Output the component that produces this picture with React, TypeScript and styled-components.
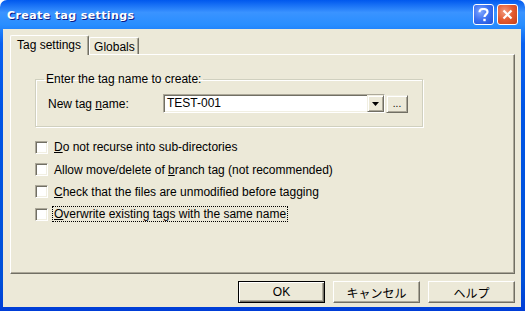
import styled, { createGlobalStyle } from 'styled-components';

const GlobalStyle = createGlobalStyle`
  html, body {
    margin: 0;
    padding: 0;
    background: #ffffff;
  }
  body {
    font-family: 'Liberation Sans', Arial, 'Noto Sans CJK JP', sans-serif;
    font-size: 12px;
    color: #000000;
  }
`;

const Window = styled.div`
  width: 525px;
  height: 311px;
  box-sizing: border-box;
  display: flex;
  flex-direction: column;
  border-radius: 7px 7px 0 0;
  overflow: hidden;
  background: linear-gradient(180deg, #0058ee 0%, #3a93ff 4%, #288eff 8%, #0a61f0 14%, #0055e5 35%, #0052dd 70%, #0050d8 90%, #003dd7 100%);
`;

const TitleBar = styled.div`
  height: 29px;
  flex: none;
  display: flex;
  align-items: center;
  padding: 0 7px 0 7px;
  gap: 3px;
`;

const TitleText = styled.div`
  flex: 1;
  color: #ffffff;
  font-family: 'DejaVu Sans', Verdana, sans-serif;
  font-weight: bold;
  font-size: 11px;
  letter-spacing: 0.4px;
  text-shadow: 1px 1px 0 #0a1883;
  padding-top: 1px;
`;

const CaptionButton = styled.div<{ $variant: 'help' | 'close' }>`
  width: 21px;
  height: 21px;
  box-sizing: border-box;
  border: 1px solid #ffffff;
  border-radius: 3px;
  display: flex;
  align-items: center;
  justify-content: center;
  background: ${({ $variant }) =>
    $variant === 'close'
      ? 'radial-gradient(circle at 35% 35%, #f29a7d 0%, #e35a2f 50%, #c4401a 100%)'
      : 'radial-gradient(circle at 35% 35%, #7fa6ff 0%, #3a6ff0 50%, #2152d6 100%)'};
`;

const Client = styled.div`
  flex: 1;
  margin: 0 4px 4px 3px;
  background: #ece9d8;
  display: flex;
  flex-direction: column;
  padding: 6px 6px 0 7px;
`;

const TabStrip = styled.div`
  display: flex;
  align-items: flex-end;
  height: 19px;
  position: relative;
  z-index: 1;
`;

const Tab = styled.div<{ $active?: boolean }>`
  box-sizing: border-box;
  height: ${({ $active }) => ($active ? '20px' : '17px')};
  margin-bottom: ${({ $active }) => ($active ? '-1px' : '0')};
  padding: ${({ $active }) => ($active ? '2px 7px 0 6px' : '2px 3px 0 4px')};
  border-top: 1px solid #ffffff;
  border-left: 1px solid #ffffff;
  border-right: 1px solid #716f64;
  box-shadow: inset -1px 0 0 #aca899;
  border-radius: 2px 2px 0 0;
  background: #ece9d8;
  white-space: nowrap;
  line-height: 15px;
`;

const Panel = styled.div`
  height: 220px;
  box-sizing: border-box;
  border-top: 1px solid #ffffff;
  border-left: 1px solid #ffffff;
  border-right: 1px solid #716f64;
  border-bottom: 1px solid #716f64;
  box-shadow: inset -1px -1px 0 #aca899;
  padding: 17px 0 0 24px;
  display: flex;
  flex-direction: column;
`;

const GroupBox = styled.fieldset`
  margin: 0;
  width: 388px;
  height: 55px;
  box-sizing: border-box;
  border: 1px solid #d0d0bf;
  border-radius: 0;
  box-shadow: inset 1px 1px 0 #ffffff, 1px 1px 0 #ffffff;
  padding: 8px 0 0 12px;
  min-inline-size: 0;
`;

const Legend = styled.legend`
  padding: 0 2px;
  margin-left: -4px;
  line-height: 14px;
`;

const FieldRow = styled.div`
  display: flex;
  align-items: center;
  height: 19px;
`;

const FieldLabel = styled.label`
  width: 115px;
`;

const ComboBox = styled.div`
  width: 222px;
  height: 19px;
  box-sizing: border-box;
  display: flex;
  background: #ffffff;
  border-top: 1px solid #aca899;
  border-left: 1px solid #aca899;
  border-right: 1px solid #ffffff;
  border-bottom: 1px solid #ffffff;
  box-shadow: inset 1px 1px 0 #716f64, inset -1px -1px 0 #f1efe2;
`;

const ComboText = styled.div`
  flex: 1;
  padding: 1px 0 0 3px;
  line-height: 15px;
`;

const RaisedButton = styled.div<{ $width: number; $height: number }>`
  width: ${({ $width }) => $width}px;
  height: ${({ $height }) => $height}px;
  box-sizing: border-box;
  background: #ece9d8;
  border-top: 1px solid #f1efe2;
  border-left: 1px solid #f1efe2;
  border-right: 1px solid #716f64;
  border-bottom: 1px solid #716f64;
  box-shadow: inset 1px 1px 0 #ffffff, inset -1px -1px 0 #aca899;
  display: flex;
  align-items: center;
  justify-content: center;
  flex: none;
`;

const EllipsisButton = styled(RaisedButton)`
  margin-left: 1px;
  font-size: 10px;
  line-height: 10px;
  padding-top: 1px;
`;

const CheckList = styled.div`
  display: flex;
  flex-direction: column;
  margin-top: 9px;
`;

const CheckRow = styled.div`
  display: flex;
  align-items: center;
  height: 22.4px;
  gap: 5px;
`;

const CheckBox = styled.div`
  width: 13px;
  height: 13px;
  box-sizing: border-box;
  background: #ffffff;
  border-top: 1px solid #aca899;
  border-left: 1px solid #aca899;
  border-right: 1px solid #ffffff;
  border-bottom: 1px solid #ffffff;
  box-shadow: inset 1px 1px 0 #716f64, inset -1px -1px 0 #f1efe2;
  flex: none;
`;

const CheckLabel = styled.span<{ $focused?: boolean }>`
  white-space: nowrap;
  line-height: 14px;
  padding: 0 1px;
  outline: ${({ $focused }) => ($focused ? '1px dotted #000000' : 'none')};
`;

const ButtonRow = styled.div`
  display: flex;
  justify-content: flex-end;
  gap: 8px;
  padding: 7px 0 0 0;
`;

const DialogButton = styled.div<{ $default?: boolean }>`
  width: 87px;
  height: 22px;
  box-sizing: border-box;
  background: #ece9d8;
  display: flex;
  align-items: center;
  justify-content: center;
  border: 1px solid;
  border-color: ${({ $default }) =>
    $default ? '#000000' : '#ffffff #716f64 #716f64 #ffffff'};
  box-shadow: ${({ $default }) =>
    $default
      ? 'inset 1px 1px 0 #ffffff, inset -1px -1px 0 #716f64, inset -2px -2px 0 #aca899'
      : 'inset -1px -1px 0 #aca899'};
`;

const U = styled.span`
  text-decoration: underline;
`;

function DropArrow() {
  return (
    <svg width="7" height="4" viewBox="0 0 7 4">
      <polygon points="0,0 7,0 3.5,4" fill="#000000" />
    </svg>
  );
}

export default function App() {
  return (
    <>
      <GlobalStyle />
      <Window>
        <TitleBar>
          <TitleText>Create tag settings</TitleText>
          <CaptionButton $variant="help">
            <svg width="11" height="14" viewBox="0 0 11 14">
              <path
                d="M1.5 4.2 C1.5 1.8 3.2 1 5.5 1 C7.8 1 9.5 2.2 9.5 4.1 C9.5 6.3 6.5 6.6 6.5 9"
                fill="none"
                stroke="#ffffff"
                strokeWidth="2.2"
              />
              <rect x="5.3" y="10.8" width="2.4" height="2.4" fill="#ffffff" />
            </svg>
          </CaptionButton>
          <CaptionButton $variant="close">
            <svg width="11" height="11" viewBox="0 0 11 11">
              <path d="M1.5 1.5 L9.5 9.5 M9.5 1.5 L1.5 9.5" stroke="#ffffff" strokeWidth="2.2" />
            </svg>
          </CaptionButton>
        </TitleBar>
        <Client>
          <TabStrip>
            <Tab $active>Tag settings</Tab>
            <Tab>Globals</Tab>
          </TabStrip>
          <Panel>
            <GroupBox>
              <Legend>Enter the tag name to create:</Legend>
              <FieldRow>
                <FieldLabel>
                  New tag <U>n</U>ame:
                </FieldLabel>
                <ComboBox>
                  <ComboText>TEST-001</ComboText>
                  <RaisedButton $width={17} $height={17}>
                    <DropArrow />
                  </RaisedButton>
                </ComboBox>
                <EllipsisButton $width={22} $height={18}>...</EllipsisButton>
              </FieldRow>
            </GroupBox>
            <CheckList>
              <CheckRow>
                <CheckBox />
                <CheckLabel>
                  <U>D</U>o not recurse into sub-directories
                </CheckLabel>
              </CheckRow>
              <CheckRow>
                <CheckBox />
                <CheckLabel>
                  Allow move/delete of <U>b</U>ranch tag (not recommended)
                </CheckLabel>
              </CheckRow>
              <CheckRow>
                <CheckBox />
                <CheckLabel>
                  <U>C</U>heck that the files are unmodified before tagging
                </CheckLabel>
              </CheckRow>
              <CheckRow>
                <CheckBox />
                <CheckLabel $focused>
                  <U>O</U>verwrite existing tags with the same name
                </CheckLabel>
              </CheckRow>
            </CheckList>
          </Panel>
          <ButtonRow>
            <DialogButton $default>OK</DialogButton>
            <DialogButton>キャンセル</DialogButton>
            <DialogButton>ヘルプ</DialogButton>
          </ButtonRow>
        </Client>
      </Window>
    </>
  );
}
